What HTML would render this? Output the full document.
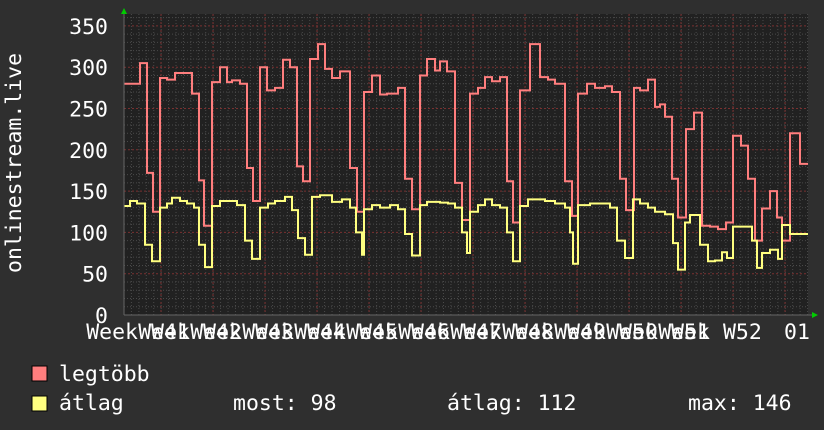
<!DOCTYPE html>
<html><head><meta charset="utf-8"><style>
html,body{margin:0;padding:0;background:#2f2f2f;width:824px;height:430px;overflow:hidden}
svg{display:block}
text{font-family:"DejaVu Sans Mono","Liberation Mono",monospace;fill:#fff;font-size:21.5px}
</style></head><body>
<svg id="s" width="824" height="430" xmlns="http://www.w3.org/2000/svg">
<rect x="0" y="0" width="824" height="430" fill="#2f2f2f"/>
<rect x="124" y="14" width="684" height="301" fill="#212121"/>
<g id="grid"></g>
<path id="pk" fill="none" stroke="#ff7e7e" stroke-width="2"/>
<path id="yl" fill="none" stroke="#ffff80" stroke-width="2"/>
<line x1="124" y1="315" x2="812" y2="315" stroke="#666" stroke-width="1"/>
<line x1="124" y1="10" x2="124" y2="315" stroke="#666" stroke-width="1"/>
<polygon points="121,14 127,14 124,8" fill="#00cc00"/>
<polygon points="812,312 812,318 818,315" fill="#00cc00"/>
<g id="lbl"></g>
<text x="0" y="0" transform="translate(21,273) rotate(-90)">onlinestream.live</text>
<rect x="32" y="366" width="15" height="15" fill="#ff7e7e" stroke="#000"/>
<rect x="32" y="396" width="15" height="15" fill="#ffff80" stroke="#000"/>
<text x="59" y="381">legtöbb</text>
<text x="59" y="410">átlag</text>
<text x="233" y="410">most: 98</text>
<text x="447" y="410">átlag: 112</text>
<text x="688" y="410">max: 146</text>
</svg>
<script>
function Y(v){return 315-v*0.826;}
var g=document.getElementById('grid'),h='';
for(var v=10;v<=360;v+=10){var y=Y(v);if(y<14)break;
 if(v%50==0)h+='<line x1="124" x2="808" y1="'+y+'" y2="'+y+'" stroke="#7a3030" stroke-dasharray="2,2"/>';
 else h+='<line x1="124" x2="808" y1="'+y+'" y2="'+y+'" stroke="#4a4a4a" stroke-dasharray="1,2"/>';}
for(var x=124+7.43;x<808;x+=7.43){h+='<line y1="14" y2="315" x1="'+x+'" x2="'+x+'" stroke="#4a4a4a" stroke-dasharray="1,2"/>';}
for(var k=0;k<13;k++){var x=161+52*k;if(x>808)break;h+='<line y1="14" y2="315" x1="'+x+'" x2="'+x+'" stroke="#7a3030" stroke-dasharray="2,2"/>';}
g.innerHTML=h;
var l='';
for(var k=0;k<12;k++){l+='<text x="'+(138+52*k)+'" y="339" text-anchor="middle">Week W'+(41+k)+'</text>';}
l+='<text x="797" y="339" text-anchor="middle">01</text>';
l+='<text x="108" y="34" text-anchor="end">350</text>';
[300,250,200,150,100,50,0].forEach(function(v){l+='<text x="108" y="'+(Y(v)+8)+'" text-anchor="end">'+v+'</text>';});
document.getElementById('lbl').innerHTML=l;
function path(a){var d='';for(var i=0;i<a.length;i+=2){var x=a[i],y=Y(a[i+1]);
 if(i==0)d='M'+x+' '+y;else d+=' H'+x+' V'+y;}d+=' H808';return d;}
var pk=[124,280,140,305,147,172,153,125,160,287,167,285,175,293,192,268,199,163,204,108,212,282,220,300,227,282,232,284,240,280,247,178,253,138,260,300,267,272,275,275,283,309,290,300,297,180,303,162,310,310,318,328,325,298,332,287,340,295,350,178,357,125,364,270,372,290,380,267,387,268,398,275,405,165,412,128,420,290,427,310,435,296,440,307,447,295,455,160,462,115,470,268,478,275,485,288,492,283,500,288,507,162,513,112,520,272,530,328,540,288,548,285,555,280,565,162,572,120,578,268,587,280,595,275,605,277,612,270,620,165,626,127,634,275,640,272,648,285,655,252,660,255,665,240,672,165,678,118,686,225,694,245,702,108,710,107,718,104,726,112,733,217,741,205,748,165,755,90,762,129,770,150,777,118,782,90,790,220,800,183];
var yl=[124,132,130,138,137,135,145,85,152,65,160,130,167,135,172,142,180,138,187,135,194,130,199,85,205,58,212,132,220,138,237,133,245,90,252,68,260,130,268,135,275,138,285,143,292,127,298,93,305,73,312,143,320,145,332,137,342,140,350,130,356,100,362,73,364,128,372,133,380,130,390,133,398,128,405,98,412,72,420,133,427,137,440,136,448,135,455,130,462,100,467,75,470,125,478,133,485,140,492,133,500,130,507,100,513,65,520,132,528,140,545,138,555,135,565,130,570,100,573,62,578,133,590,135,600,135,610,130,617,90,625,69,633,140,640,135,648,130,655,125,665,122,673,87,678,55,685,112,690,121,700,85,708,65,715,66,722,76,727,69,733,107,752,90,757,57,762,75,770,79,778,68,782,109,790,98];
document.getElementById('pk').setAttribute('d',path(pk));
document.getElementById('yl').setAttribute('d',path(yl));
</script>
</body></html>
